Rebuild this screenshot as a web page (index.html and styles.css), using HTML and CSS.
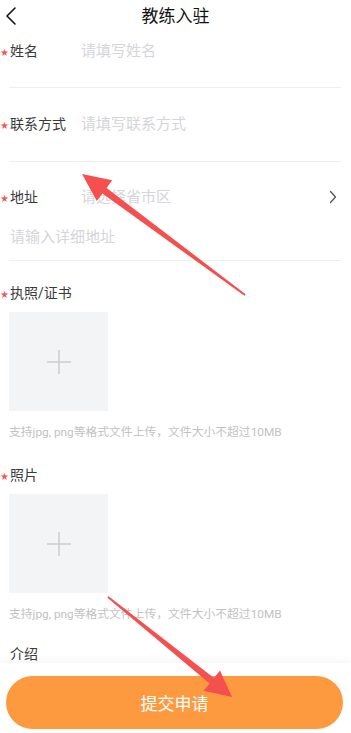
FILE: index.html
```html
<!DOCTYPE html>
<html lang="zh">
<head>
    <meta charset="UTF-8">
    <title>教练入驻</title>
    <link rel="stylesheet" href="styles.css">
</head>
<body>
    <header class="nav-bar">
        <svg class="nav-back" width="12" height="20" viewBox="0 0 12 20">
            <path d="M10 2 L2 10 L10 18" fill="none" stroke="#111" stroke-width="1.6" stroke-linecap="round" stroke-linejoin="round"/>
        </svg>
        <h1 class="nav-title">教练入驻</h1>
        <span></span>
    </header>

    <main class="form">
        <div class="field field-first">
            <label class="field-label required">姓名</label>
            <input class="field-input" type="text" placeholder="请填写姓名">
        </div>

        <div class="field">
            <label class="field-label required">联系方式</label>
            <input class="field-input" type="text" placeholder="请填写联系方式">
        </div>

        <div class="field field-address">
            <div class="address-line">
                <label class="field-label required">地址</label>
                <input class="field-input" type="text" placeholder="请选择省市区">
                <svg class="chevron" width="8" height="14" viewBox="0 0 8 14">
                    <path d="M1.5 1.5 L6.5 7 L1.5 12.5" fill="none" stroke="#555" stroke-width="1.3" stroke-linecap="round" stroke-linejoin="round"/>
                </svg>
            </div>
            <input class="field-input address-detail" type="text" placeholder="请输入详细地址">
        </div>

        <section class="upload-group">
            <label class="field-label required">执照/证书</label>
            <div class="upload-box">
                <svg width="24" height="24" viewBox="0 0 24 24">
                    <path d="M12 0 V24 M0 12 H24" stroke="#cbcbcb" stroke-width="1.5"/>
                </svg>
            </div>
            <p class="upload-hint">支持jpg, png等格式文件上传，文件大小不超过10MB</p>
        </section>

        <section class="upload-group">
            <label class="field-label required">照片</label>
            <div class="upload-box">
                <svg width="24" height="24" viewBox="0 0 24 24">
                    <path d="M12 0 V24 M0 12 H24" stroke="#cbcbcb" stroke-width="1.5"/>
                </svg>
            </div>
            <p class="upload-hint">支持jpg, png等格式文件上传，文件大小不超过10MB</p>
        </section>

        <section class="intro-group">
            <label class="field-label">介绍</label>
            <textarea class="intro-text" placeholder="请填写介绍"></textarea>
        </section>
    </main>

    <div class="bottom-bar">
        <button class="submit-button">提交申请</button>
    </div>

    <!-- annotation arrows drawn on top of the screenshot -->
    <svg class="annotations" width="351" height="733" viewBox="0 0 351 733">
        <polygon points="82,174 112.2,180.3 106.6,187.9 245.6,294.2 244.4,295.8 102.4,193.5 96.8,201.1" fill="#f4504f"/>
        <polygon points="232,697 220,670.6 214,678 108.6,596.2 107.4,597.8 209.6,683.4 203.6,690.8" fill="#f4504f"/>
    </svg>
</body>
</html>
```

FILE: styles.css
```css
:root {
    --label-color: #3a3a3a;
    --placeholder-color: #d5d5da;
    --hint-color: #c2c2c2;
    --line-color: #eeeeee;
    --accent-color: #fd9a40;
    --star-color: #f0585a;
}

* {
    margin: 0;
    padding: 0;
    box-sizing: border-box;
}

html, body {
    height: 733px;
    overflow: hidden;
}

body {
    font-family: Roboto, "Noto Sans CJK SC", sans-serif;
    background-color: #fff;
    color: var(--label-color);
    position: relative;
}

.nav-bar {
    height: 32px;
    display: grid;
    grid-template-columns: 40px 1fr 40px;
    align-items: center;
}

.nav-back {
    margin-left: 5px;
}

.nav-title {
    text-align: center;
    font-size: 17px;
    font-weight: 400;
    color: #111;
    line-height: 20px;
}

.form {
    padding: 0 10px 0 9px;
}

.field {
    display: flex;
    align-items: center;
    padding: 26px 0 27px;
    border-bottom: 1px solid var(--line-color);
}

.field-first {
    padding-top: 9px;
    padding-bottom: 26px;
}

.field-label {
    display: flex;
    align-items: center;
    width: 72px;
    height: 20px;
    flex-shrink: 0;
    font-size: 14px;
    line-height: 20px;
    color: var(--label-color);
    padding-left: 1px;
}

.required::before {
    content: "★";
    width: 10px;
    margin-left: -10px;
    padding-top: 4px;
    font-size: 10px;
    line-height: 20px;
    color: var(--star-color);
    font-family: "DejaVu Sans", sans-serif;
}

.field-input {
    flex: 1;
    min-width: 0;
    height: 20px;
    border: none;
    outline: none;
    background: transparent;
    font-family: inherit;
    font-size: 15px;
    line-height: 20px;
    color: var(--label-color);
}

.field-input::placeholder,
.intro-text::placeholder {
    color: var(--placeholder-color);
}

.field-address {
    display: block;
    padding: 25px 0 13px;
}

.address-line {
    display: flex;
    align-items: center;
}

.chevron {
    margin-right: 4px;
}

.address-detail {
    display: block;
    width: 100%;
    margin-top: 20px;
    padding-left: 1px;
}

.upload-group {
    padding-top: 26px;
}

.upload-group:first-of-type {
    padding-top: 22px;
}

.upload-box {
    width: 99px;
    height: 99px;
    margin-top: 9px;
    background-color: #f3f4f6;
    display: flex;
    align-items: center;
    justify-content: center;
}

.upload-hint {
    margin-top: 14px;
    font-size: 11.8px;
    line-height: 14px;
    color: var(--hint-color);
    white-space: nowrap;
}

.intro-group {
    padding-top: 23px;
}

.intro-text {
    display: block;
    width: 100%;
    height: 100px;
    margin-top: 10px;
    border: none;
    outline: none;
    resize: none;
    font-family: inherit;
    font-size: 15px;
}

.bottom-bar {
    position: fixed;
    left: 0;
    right: 0;
    bottom: 0;
    height: 70px;
    padding: 13px 8px 4px 6px;
    background-color: #fff;
    box-shadow: 0 -3px 8px rgba(0, 0, 0, 0.04);
}

.submit-button {
    width: 100%;
    height: 53px;
    border: none;
    border-radius: 27px;
    background-color: var(--accent-color);
    color: #fff;
    font-family: inherit;
    font-size: 17px;
}

.annotations {
    position: absolute;
    top: 0;
    left: 0;
    pointer-events: none;
    z-index: 10;
}
```
